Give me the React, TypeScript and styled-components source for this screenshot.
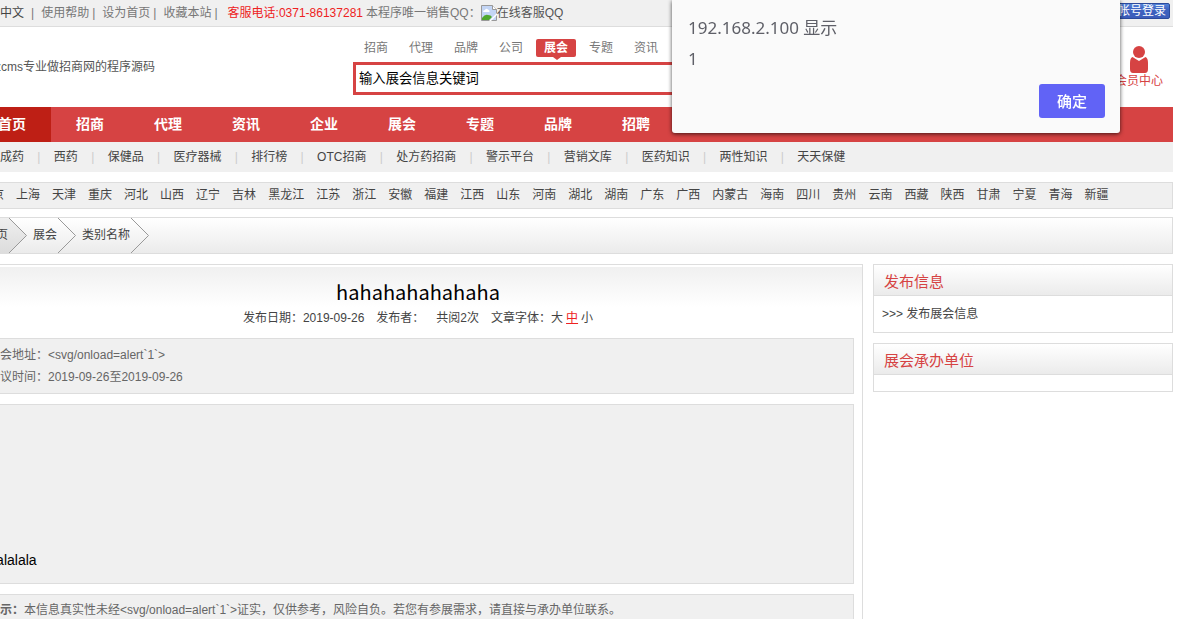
import React from "react";
import styled, { createGlobalStyle } from "styled-components";

const RED = "#d64343";
const LINE = "#dddddd";
const PALE = "#f0f0f0";

const Global = createGlobalStyle`
  * { box-sizing: border-box; }
  body {
    margin: 0;
    background: #fff;
    overflow: hidden;
    font: 12px/22px "Liberation Sans", "Noto Sans CJK SC", sans-serif;
    color: #444;
  }
  a { color: inherit; text-decoration: none; }
  h1, h2, p, ul, ol { margin: 0; padding: 0; font-weight: normal; list-style: none; }
`;

const Page = styled.div`
  margin: 0 7px 0 -27px;
`;

const TopBar = styled.div`
  display: flex;
  align-items: flex-start;
  justify-content: space-between;
  height: 27px;
  padding: 3px 3px 0 27px;
  background: ${PALE};
  border-bottom: 1px solid ${LINE};
  color: #777;
  line-height: 20px;
  white-space: nowrap;
`;

const TopLinks = styled.div`
  display: flex;
  align-items: center;
`;

const TopLink = styled.a<{ $dark?: boolean }>`
  color: ${(p) => (p.$dark ? "#444" : "#777")};
`;

const Bar = styled.span<{ $lead?: number }>`
  margin: 0 7px 0 ${(p) => p.$lead ?? 3}px;
`;

const Hotline = styled.span`
  margin: 0 3px;
  color: #ee2222;
`;

const QQ = styled.a`
  display: flex;
  align-items: center;
  color: #555;
`;

const LoginBadge = styled.a`
  width: 74px;
  height: 16px;
  border: 1px solid #2b4a9c;
  border-radius: 2px;
  background: linear-gradient(#5383d8, #3d62c0 40%, #3c5dba);
  color: #fff;
  line-height: 15px;
  text-align: right;
  padding-right: 3px;
`;

const Header = styled.header`
  display: flex;
  height: 80px;
  padding: 0 10px 0 22px;
`;

const Slogan = styled.p`
  flex: 0 0 358px;
  padding-top: 29px;
  color: #555;
`;

const Search = styled.form`
  flex: 0 1 460px;
  padding-top: 12px;
`;

const Tabs = styled.div`
  display: flex;
  gap: 5px;
  padding-left: 3px;
`;

const Tab = styled.button<{ $active?: boolean }>`
  position: relative;
  width: 40px;
  height: 18px;
  padding: 0;
  border: 0;
  border-radius: 2px;
  font: inherit;
  line-height: 16px;
  font-weight: ${(p) => (p.$active ? "bold" : "normal")};
  color: ${(p) => (p.$active ? "#fff" : "#777")};
  background: ${(p) => (p.$active ? RED : "transparent")};
`;

const Pointer = styled.i`
  position: absolute;
  left: 17px;
  top: 18px;
  border: 4px solid transparent;
  border-top: 3px solid ${RED};
  border-bottom: 0;
`;

const SearchInput = styled.input`
  display: block;
  width: 100%;
  height: 33px;
  margin-top: 5px;
  padding: 0 3px 2px;
  border: 3px solid ${RED};
  font-family: "Liberation Sans", "Noto Sans CJK SC", sans-serif;
  color: #000;
`;

const Member = styled.a`
  display: flex;
  flex-direction: column;
  align-items: center;
  margin-left: auto;
  padding-top: 19px;
  color: ${RED};
  line-height: 16px;
`;

const Nav = styled.nav`
  display: flex;
  height: 35px;
  background: ${RED};
`;

const NavLink = styled.a<{ $active?: boolean }>`
  flex: 0 0 78px;
  background: ${(p) => (p.$active ? "#be1f15" : "transparent")};
  color: #fff;
  font-size: 14px;
  font-weight: bold;
  line-height: 34px;
  text-align: center;
`;

const SubNav = styled.nav`
  display: flex;
  height: 30px;
  padding-left: 15px;
  background: ${PALE};
  line-height: 30px;
  white-space: nowrap;
`;

const SubLink = styled.a`
  &:not(:last-child)::after {
    content: "    |    ";
    white-space: pre;
    color: #ccc;
  }
`;

const Regions = styled.nav`
  display: flex;
  gap: 12px;
  height: 27px;
  margin-top: 10px;
  padding-left: 6px;
  border: 1px solid ${LINE};
  background: ${PALE};
  line-height: 24px;
  white-space: nowrap;
`;

const Crumbs = styled.nav`
  display: flex;
  height: 37px;
  margin-top: 8px;
  border: 1px solid ${LINE};
  background: linear-gradient(#fff, #ebebeb);
  line-height: 35px;
`;

const Crumb = styled.a<{ $home?: boolean }>`
  padding: 0 1px 0 ${(p) => (p.$home ? 10 : 6)}px;
  background: ${(p) => (p.$home ? "linear-gradient(#efefef, #dcdcdc)" : "none")};
`;

const Columns = styled.div`
  display: flex;
  gap: 10px;
  margin-top: 10px;
  align-items: flex-start;
`;

const Article = styled.main`
  flex: 1;
  min-width: 0;
  padding: 2px 8px 8px;
  border: 1px solid ${LINE};
  background: linear-gradient(${PALE}, #fff) 0 2px / 100% 40px no-repeat;
`;

const Title = styled.h1`
  padding-top: 9px;
  font: 20px/32px "Noto Sans CJK SC", sans-serif;
  color: #000;
  text-align: center;
`;

const Meta = styled.div`
  display: flex;
  justify-content: center;
  gap: 12px;
  line-height: 20px;
  padding-bottom: 10px;
`;

const FontSize = styled.a<{ $on?: boolean }>`
  margin-right: 3px;
  color: ${(p) => (p.$on ? "#ee2222" : "inherit")};
  text-decoration: ${(p) => (p.$on ? "underline" : "none")};
  &:last-child { margin-right: 0; }
`;

const Box = styled.section`
  margin-bottom: 10px;
  padding: 5px;
  border: 1px solid ${LINE};
  background: ${PALE};
  color: #666;
`;

const Body = styled(Box)`
  display: flex;
  align-items: flex-end;
  min-height: 180px;
  padding: 10px 10px 12px;
  font-size: 14px;
  color: #000;
`;

const Notice = styled(Box)`
  line-height: 20px;
`;

const Side = styled.aside`
  flex: 0 0 300px;
`;

const Card = styled.section`
  margin-bottom: 10px;
  border: 1px solid ${LINE};
`;

const CardTitle = styled.h2`
  height: 31px;
  padding-left: 10px;
  border-bottom: 1px solid ${LINE};
  background: linear-gradient(#fff, #ebebeb);
  color: ${RED};
  font-size: 15px;
  line-height: 34px;
`;

const CardBody = styled.div`
  min-height: 16px;
  padding: 0 8px;
`;

const CardLink = styled.a`
  display: block;
  line-height: 36px;
`;

const Dialog = styled.div`
  position: fixed;
  top: 0;
  right: 60px;
  width: 448px;
  height: 133px;
  padding: 12px 15px 15px 16px;
  display: flex;
  flex-direction: column;
  border-radius: 0 0 3px 3px;
  background: #fafafa;
  box-shadow: 0 1px 4px rgba(0, 0, 0, 0.7);
  color: #5f6068;
  font: 17px/31px "Noto Sans", "Noto Sans CJK SC", sans-serif;
`;

const OkButton = styled.button`
  align-self: flex-end;
  margin-top: auto;
  width: 66px;
  height: 34px;
  padding: 0;
  border: 0;
  border-radius: 3px;
  background: #6163f6;
  color: #fff;
  font: 500 15px/32px "Noto Sans CJK SC", sans-serif;
`;

const BrokenImage = () => (
  <svg width="16" height="16" viewBox="0 0 16 16" aria-hidden="true">
    <path d="M.5 .5H11.5L15.5 4.5V15.5H.5Z" fill="#c3d5f5" stroke="#999" />
    <path d="M2 7Q2 5 4 5Q5 3 7 4.500Q9 5 8.500 7Z" fill="#fff" />
    <path d="M1 15V13Q4 9 7 10Q10 10 11 12L8 15Z" fill="#50a82e" />
    <path d="M11.500 .5V4.500H15.500" fill="#fff" stroke="#999" />
    <path d="M8 16L16 8V10L10 16Z" fill="#fff" />
  </svg>
);

const Person = () => (
  <svg width="18" height="27" viewBox="0 0 18 27" fill={RED} aria-hidden="true">
    <circle cx="9" cy="6" r="6" />
    <path d="M2.500 11L9 15L15.500 11Q18 12 18 17V23Q18 27 15 27H3Q0 27 0 23V17Q0 12 2.500 11Z" />
  </svg>
);

const Chevron = ({ fill = "none" }: { fill?: string }) => (
  <svg width="18" height="35" viewBox="0 0 18 35" aria-hidden="true">
    <defs>
      <linearGradient id="home" x1="0" y1="0" x2="0" y2="1">
        <stop offset="0" stopColor="#efefef" />
        <stop offset="1" stopColor="#dcdcdc" />
      </linearGradient>
    </defs>
    <path d="M0 0L17.500 17.500L0 35" fill={fill} stroke="#999" />
  </svg>
);

const tabs = ["招商", "代理", "品牌", "公司", "展会", "专题", "资讯"];
const nav = ["首页", "招商", "代理", "资讯", "企业", "展会", "专题", "品牌", "招聘"];
const subNav = ["中成药", "西药", "保健品", "医疗器械", "排行榜", "OTC招商", "处方药招商", "警示平台", "营销文库", "医药知识", "两性知识", "天天保健"];
const regions = "北京 上海 天津 重庆 河北 山西 辽宁 吉林 黑龙江 江苏 浙江 安徽 福建 江西 山东 河南 湖北 湖南 广东 广西 内蒙古 海南 四川 贵州 云南 西藏 陕西 甘肃 宁夏 青海 新疆".split(" ");

export default function App() {
  return (
    <>
      <Global />
      <Page>
        <TopBar>
          <TopLinks>
            <TopLink href="#" $dark>中文</TopLink>
            <Bar $lead={7}>|</Bar>
            <TopLink href="#">使用帮助</TopLink>
            <Bar>|</Bar>
            <TopLink href="#">设为首页</TopLink>
            <Bar>|</Bar>
            <TopLink href="#">收藏本站</TopLink>
            <Bar>|</Bar>
            <Hotline>客服电话:0371-86137281</Hotline>
            <span>本程序唯一销售QQ：</span>
            <QQ href="#"><BrokenImage />在线客服QQ</QQ>
          </TopLinks>
          <LoginBadge href="#">帐号登录</LoginBadge>
        </TopBar>
        <Header>
          <Slogan>zcms专业做招商网的程序源码</Slogan>
          <Search>
            <Tabs>
              {tabs.map((t) => (
                <Tab key={t} type="button" $active={t === "展会"}>
                  {t}
                  {t === "展会" && <Pointer />}
                </Tab>
              ))}
            </Tabs>
            <SearchInput aria-label="搜索" defaultValue="输入展会信息关键词" />
          </Search>
          <Member href="#"><Person />会员中心</Member>
        </Header>
        <Nav>
          {nav.map((n) => <NavLink key={n} href="#" $active={n === "首页"}>{n}</NavLink>)}
        </Nav>
        <SubNav>
          {subNav.map((n) => <SubLink key={n} href="#">{n}</SubLink>)}
        </SubNav>
        <Regions>
          {regions.map((r) => <a key={r} href="#">{r}</a>)}
        </Regions>
        <Crumbs>
          <Crumb href="#" $home>首页</Crumb>
          <Chevron fill="url(#home)" />
          <Crumb href="#">展会</Crumb>
          <Chevron />
          <Crumb href="#">类别名称</Crumb>
          <Chevron />
        </Crumbs>
        <Columns>
          <Article>
            <Title>hahahahahahaha</Title>
            <Meta>
              <span>发布日期：2019-09-26</span>
              <span>发布者：</span>
              <span>共阅2次</span>
              <span>
                文章字体：
                <FontSize href="#">大</FontSize>
                <FontSize href="#" $on>中</FontSize>
                <FontSize href="#">小</FontSize>
              </span>
            </Meta>
            <Box>
              <p>展会地址：&lt;svg/onload=alert`1`&gt;</p>
              <p>会议时间：2019-09-26至2019-09-26</p>
            </Box>
            <Body><p>lalalala</p></Body>
            <Notice>
              <b>提示：</b>本信息真实性未经&lt;svg/onload=alert`1`&gt;证实，仅供参考，风险自负。若您有参展需求，请直接与承办单位联系。
            </Notice>
          </Article>
          <Side>
            <Card>
              <CardTitle>发布信息</CardTitle>
              <CardBody><CardLink href="#">&gt;&gt;&gt; 发布展会信息</CardLink></CardBody>
            </Card>
            <Card>
              <CardTitle>展会承办单位</CardTitle>
              <CardBody />
            </Card>
          </Side>
        </Columns>
      </Page>
      <Dialog role="alertdialog" aria-label="192.168.2.100 显示">
        <p>192.168.2.100 显示</p>
        <p>1</p>
        <OkButton type="button">确定</OkButton>
      </Dialog>
    </>
  );
}
